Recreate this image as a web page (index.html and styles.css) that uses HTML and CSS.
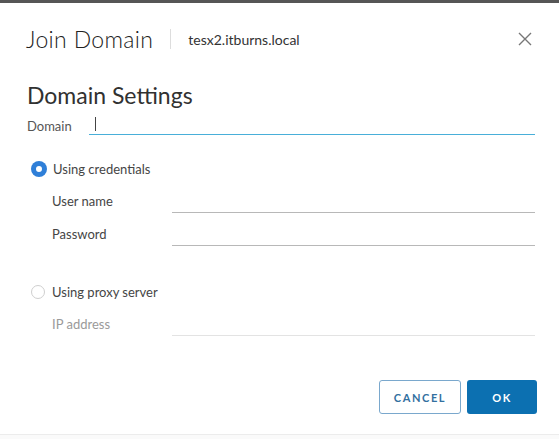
FILE: index.html
```html
<!DOCTYPE html>
<html lang="en">
<head>
    <meta charset="UTF-8">
    <title>Join Domain</title>
    <link rel="stylesheet" href="styles.css">
</head>
<body>
    <div class="topbar"></div>

    <div class="modal">
        <!-- Header -->
        <div class="modal-header">
            <h1 class="modal-title">Join Domain</h1>
            <span class="divider"></span>
            <span class="host">tesx2.itburns.local</span>
            <button class="close" aria-label="Close">
                <svg width="16" height="16" viewBox="0 0 16 16">
                    <path d="M2 2 L14 14 M14 2 L2 14" stroke="#777" stroke-width="1.4" fill="none"/>
                </svg>
            </button>
        </div>

        <h2 class="section-title">Domain Settings</h2>

        <div class="domain-row">
            <label class="domain-label">Domain</label>
            <div class="domain-input"><span class="caret"></span></div>
        </div>

        <div class="radio-row first">
            <span class="radio checked"></span>
            <span class="radio-label">Using credentials</span>
        </div>

        <div class="field">
            <label>User name</label>
            <div class="line"></div>
        </div>
        <div class="field">
            <label>Password</label>
            <div class="line"></div>
        </div>

        <div class="radio-row second">
            <span class="radio"></span>
            <span class="radio-label">Using proxy server</span>
        </div>

        <div class="field disabled">
            <label>IP address</label>
            <div class="line"></div>
        </div>

        <!-- Footer -->
        <div class="modal-footer">
            <button class="btn btn-outline">CANCEL</button>
            <button class="btn btn-primary">OK</button>
        </div>
    </div>

    <div class="bottom-edge"></div>
</body>
</html>
```

FILE: styles.css
```css
body {
    margin: 0;
    background: #fff;
    font-family: Lato, "Open Sans", sans-serif;
    color: #454545;
    height: 439px;
    overflow: hidden;
}

.topbar {
    height: 3px;
    background: #565656;
}

.modal {
    padding: 0 24px 0 26px;
}

/* Header */
.modal-header {
    display: flex;
    align-items: center;
    height: 72px;
}

.modal-title {
    margin: 0;
    font-size: 23px;
    font-weight: 300;
    color: #222;
    letter-spacing: 0.35px;
}

.divider {
    width: 1px;
    height: 20px;
    background: #ddd;
    margin: 0 17px 0 17px;
}

.host {
    font-size: 14px;
    color: #333;
    flex: 1;
}

.close {
    background: none;
    border: none;
    padding: 0;
    margin-right: 2px;
    width: 16px;
    height: 16px;
    cursor: pointer;
}

/* Domain */
.section-title {
    margin: 8px 0 0 1px;
    font-size: 23px;
    font-weight: 400;
    line-height: 24px;
    color: #313131;
}

.domain-row {
    display: flex;
    align-items: flex-end;
    margin-top: 10px;
    height: 18px;
}

.domain-label {
    width: 62px;
    margin-left: 1px;
    font-size: 13px;
    line-height: 18px;
    color: #555;
}

.domain-input {
    flex: 1;
    height: 17px;
    border-bottom: 1px solid #49afd9;
    position: relative;
}

.caret {
    position: absolute;
    left: 6px;
    top: 0;
    width: 1px;
    height: 14px;
    background: #444;
}

/* Radios */
.radio-row {
    display: flex;
    align-items: center;
    height: 16px;
    margin-left: 5px;
}

.radio-row.first {
    margin-top: 26px;
}

.radio-row.second {
    margin-top: 38px;
}

.radio {
    width: 12px;
    height: 12px;
    border-radius: 50%;
    border: 1px solid #cfcfcf;
    margin-right: 7px;
    box-sizing: content-box;
}

.radio.checked {
    width: 6px;
    height: 6px;
    border: 4px solid #2f7fd8;
    background: #fff;
    box-shadow: 0 0 0 1px #2f7fd8;
    margin-left: 1px;
    margin-right: 7px;
}

.radio-label {
    font-size: 13px;
    color: #454545;
}

/* Fields */
.field {
    display: flex;
    align-items: stretch;
    height: 23px;
    margin-left: 26px;
    margin-top: 10px;
}

.radio-row + .field {
    margin-top: 13px;
}

.field label {
    width: 120px;
    font-size: 13px;
    line-height: 22px;
    color: #454545;
}

.field .line {
    flex: 1;
    border-bottom: 1px solid #b8b8b8;
}

.field.disabled label {
    color: #9a9a9a;
}

.field.disabled .line {
    border-bottom-color: #e3e3e3;
}

/* Footer */
.modal-footer {
    display: flex;
    justify-content: flex-end;
    gap: 6px;
    margin-top: 44px;
    margin-right: -2px;
}

.btn {
    height: 34px;
    border-radius: 3px;
    font-family: Lato, sans-serif;
    font-size: 11px;
    font-weight: 700;
    letter-spacing: 1.6px;
    cursor: pointer;
}

.btn-outline {
    width: 82px;
    background: #fff;
    border: 1px solid #7aa8cd;
    color: #33709f;
}

.btn-primary {
    width: 70px;
    background: #0c70b1;
    border: none;
    color: #fff;
}

.bottom-edge {
    position: absolute;
    left: 0;
    right: 0;
    top: 434px;
    height: 5px;
    border-top: 1px solid #ececec;
    background: #fafafa;
}
```
